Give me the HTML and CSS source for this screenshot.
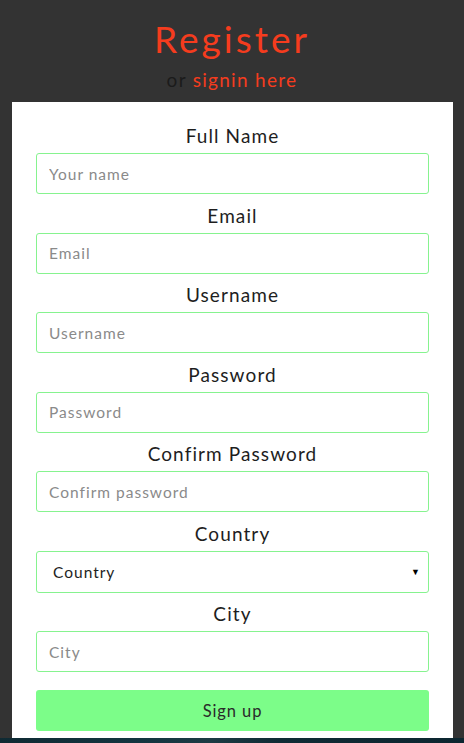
FILE: index.html
```html
<!DOCTYPE html>
<html lang="en">
<head>
<meta charset="utf-8">
<title>Register</title>
<link rel="stylesheet" href="styles.css">
</head>
<body>
<header class="head">
  <h1 class="title">Register</h1>
  <p class="sub">or <a href="#" class="link">signin here</a></p>
</header>
<form class="card">
  <div class="field first">
    <label class="label" for="name">Full Name</label>
    <input class="input" id="name" type="text" placeholder="Your name">
  </div>
  <div class="field">
    <label class="label" for="email">Email</label>
    <input class="input" id="email" type="email" placeholder="Email">
  </div>
  <div class="field">
    <label class="label" for="user">Username</label>
    <input class="input" id="user" type="text" placeholder="Username">
  </div>
  <div class="field">
    <label class="label" for="pass">Password</label>
    <input class="input" id="pass" type="password" placeholder="Password">
  </div>
  <div class="field">
    <label class="label" for="cpass">Confirm Password</label>
    <input class="input" id="cpass" type="password" placeholder="Confirm password">
  </div>
  <div class="field">
    <label class="label" for="country">Country</label>
    <div class="select-wrap">
      <select class="select" id="country">
        <option>Country</option>
      </select>
      <span class="arrow">▼</span>
    </div>
  </div>
  <div class="field">
    <label class="label" for="city">City</label>
    <input class="input" id="city" type="text" placeholder="City">
  </div>
  <button class="btn" type="button">Sign up</button>
</form>
<div class="strip"></div>
</body>
</html>
```
FILE: styles.css
```css
html, body {
  margin: 0;
  padding: 0;
}
body {
  background: #333333;
  font-family: Lato, "Open Sans", sans-serif;
  color: #222;
  width: 464px;
  height: 743px;
  overflow: hidden;
}
.head {
  text-align: center;
  padding-top: 15px;
  height: 87px;
}
.title {
  margin: 0;
  font-size: 37px;
  line-height: 48px;
  font-weight: 400;
  color: #f53c1e;
  letter-spacing: 3px;
}
.sub {
  margin: 4px 0 0;
  font-size: 19px;
  line-height: 26px;
  color: #1b1b1b;
  letter-spacing: 1.3px;
}
.link {
  color: #f53c1e;
  text-decoration: none;
}
.card {
  display: flex;
  flex-direction: column;
  background: #ffffff;
  width: 441px;
  box-sizing: border-box;
  margin-left: 12px;
  padding: 21px 24px 7px;
}
.field {
  display: flex;
  flex-direction: column;
  margin-top: 8.5px;
}
.field.first {
  margin-top: 0;
}
.label {
  display: block;
  text-align: center;
  font-size: 19px;
  line-height: 25px;
  margin-bottom: 5px;
  color: #1e1e1e;
  letter-spacing: 1.1px;
}
.input, .select {
  box-sizing: border-box;
  width: 100%;
  height: 41px;
  border: 1px solid #86f38f;
  border-radius: 3px;
  padding: 0 12px;
  font-family: Lato, "Open Sans", sans-serif;
  font-size: 15.5px;
  color: #222;
  background: #fff;
  outline: none;
  letter-spacing: 1px;
}
.input::placeholder {
  color: #8a8a8a;
}
.select-wrap {
  position: relative;
}
.select {
  height: 42px;
  appearance: none;
  -webkit-appearance: none;
  padding-left: 16px;
  color: #1e1e1e;
}
.arrow {
  position: absolute;
  right: 9px;
  top: 16px;
  font-size: 9px;
  line-height: 10px;
  color: #000;
  pointer-events: none;
}
.btn {
  margin-top: 18px;
  height: 41px;
  border: none;
  border-radius: 3px;
  background: #7cfd89;
  font-family: Lato, "Open Sans", sans-serif;
  font-size: 16.5px;
  color: #2a2a2a;
  letter-spacing: 0.9px;
}
.strip {
  height: 10px;
  background: linear-gradient(90deg, #0f2a33 0%, #123540 30%, #1c3b44 45%, #0f2b35 60%, #0c2630 100%);
}
```
